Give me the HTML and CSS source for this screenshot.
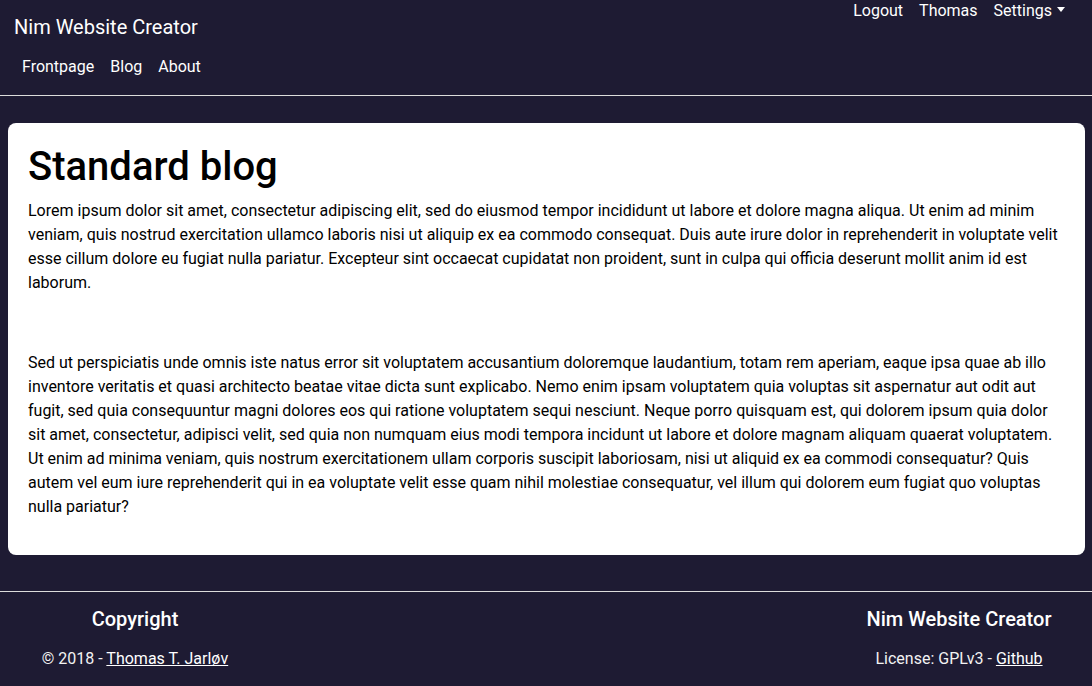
FILE: index.html
```html
<!DOCTYPE html>
<html lang="en">
<head>
<meta charset="utf-8">
<title>Nim Website Creator</title>
<link rel="stylesheet" href="styles.css">
</head>
<body>
<header class="site-header">
  <div class="header-row">
    <div class="brand">Nim Website Creator</div>
    <div class="userlinks">
      <a href="#" class="ulink">Logout</a>
      <a href="#" class="ulink">Thomas</a>
      <a href="#" class="ulink dropdown">Settings</a>
    </div>
  </div>
  <nav class="mainnav">
    <a href="#">Frontpage</a>
    <a href="#">Blog</a>
    <a href="#">About</a>
  </nav>
</header>
<hr class="rule rule-top">
<main class="card">
  <h1 class="title">Standard blog</h1>
  <p>Lorem ipsum dolor sit amet, consectetur adipiscing elit, sed do eiusmod tempor incididunt ut labore et dolore magna aliqua. Ut enim ad minim veniam, quis nostrud exercitation ullamco laboris nisi ut aliquip ex ea commodo consequat. Duis aute irure dolor in reprehenderit in voluptate velit esse cillum dolore eu fugiat nulla pariatur. Excepteur sint occaecat cupidatat non proident, sunt in culpa qui officia deserunt mollit anim id est laborum.</p>
  <p><br></p>
  <p>Sed ut perspiciatis unde omnis iste natus error sit voluptatem accusantium doloremque laudantium, totam rem aperiam, eaque ipsa quae ab illo inventore veritatis et quasi architecto beatae vitae dicta sunt explicabo. Nemo enim ipsam voluptatem quia voluptas sit aspernatur aut odit aut fugit, sed quia consequuntur magni dolores eos qui ratione voluptatem sequi nesciunt. Neque porro quisquam est, qui dolorem ipsum quia dolor sit amet, consectetur, adipisci velit, sed quia non numquam eius modi tempora incidunt ut labore et dolore magnam aliquam quaerat voluptatem. Ut enim ad minima veniam, quis nostrum exercitationem ullam corporis suscipit laboriosam, nisi ut aliquid ex ea commodi consequatur? Quis autem vel eum iure reprehenderit qui in ea voluptate velit esse quam nihil molestiae consequatur, vel illum qui dolorem eum fugiat quo voluptas nulla pariatur?</p>
</main>
<hr class="rule rule-bottom">
<footer class="site-footer">
  <div class="fcol fcol-left">
    <h5 class="fhead">Copyright</h5>
    <div class="ftext">© 2018 - <a href="#">Thomas T. Jarløv</a></div>
  </div>
  <div class="fcol fcol-right">
    <h5 class="fhead">Nim Website Creator</h5>
    <div class="ftext">License: GPLv3 - <a href="#">Github</a></div>
  </div>
</footer>
</body>
</html>
```
FILE: styles.css
```css
* { box-sizing: border-box; }
html, body { margin: 0; padding: 0; }
body {
  background: #1e1b33;
  color: #ffffff;
  font-family: Roboto, "Liberation Sans", sans-serif;
  font-size: 16px;
  line-height: 24px;
}
a { color: #ffffff; text-decoration: none; }

.header-row {
  display: flex;
  justify-content: space-between;
  align-items: flex-start;
}
.brand {
  font-size: 20px;
  line-height: 26px;
  margin-top: 14px;
  padding-left: 14px;
}
.userlinks {
  display: flex;
  gap: 16px;
  line-height: 20px;
  padding-top: 1px;
  padding-right: 27px;
}
.dropdown::after {
  content: "";
  display: inline-block;
  margin-left: 5px;
  vertical-align: 4px;
  border-top: 5px solid #fff;
  border-left: 4.5px solid transparent;
  border-right: 4.5px solid transparent;
}
.mainnav {
  display: flex;
  gap: 16px;
  padding-left: 22px;
  margin-top: 14px;
  line-height: 24px;
  padding-top: 1px;
}

.rule {
  border: 0;
  height: 1px;
  background: #dcdcdc;
  margin: 0;
}
.rule-top { margin-top: 16px; }

.card {
  background: #ffffff;
  color: #000000;
  margin: 27px 7px 0 8px;
  border-radius: 8px;
  padding: 20px 20px 20px 20px;
}
.title {
  font-size: 40px;
  line-height: 48px;
  font-weight: 500;
  margin: 0 0 8px 0;
}
.card p {
  margin: 0 0 16px 0;
}

.rule-bottom { margin-top: 36px; }

.site-footer {
  display: flex;
  justify-content: space-between;
  padding-top: 15px;
  padding-bottom: 16px;
}
.fcol {
  text-align: center;
}
.fcol-left { width: 270px; }
.fcol-right { width: 266px; }
.fhead {
  margin: 0;
  font-size: 20px;
  line-height: 24px;
  font-weight: 500;
}
.ftext {
  margin-top: 16px;
  color: #f2f2f2;
}
.ftext a { text-decoration: underline; }
```
